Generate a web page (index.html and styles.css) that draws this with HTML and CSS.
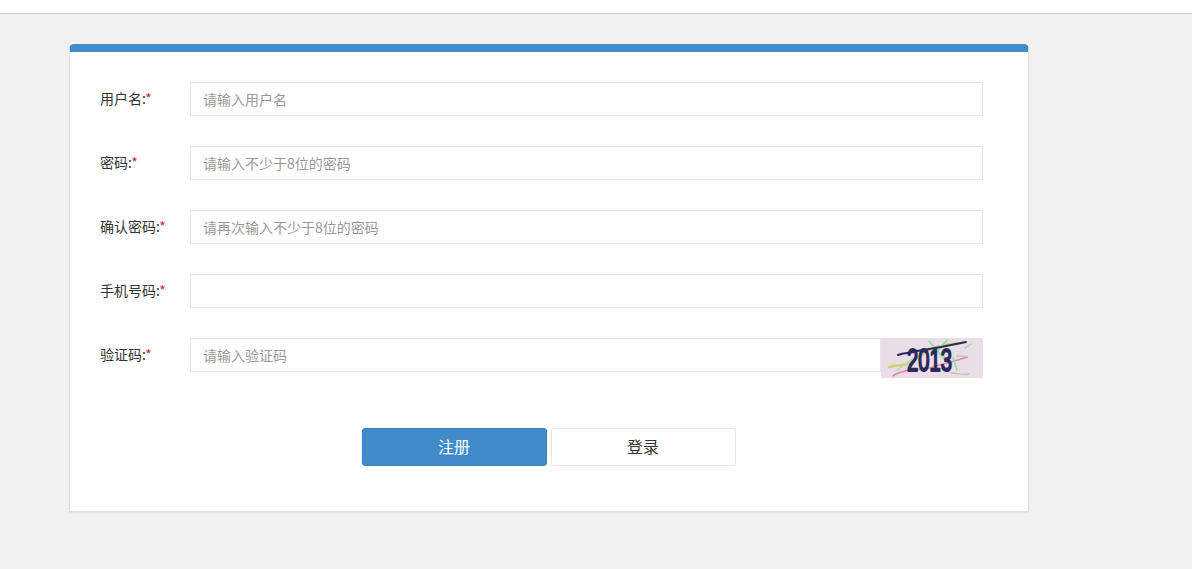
FILE: index.html
```html
<!DOCTYPE html>
<html lang="zh">
<head>
<meta charset="utf-8">
<title>注册</title>
<link rel="stylesheet" href="styles.css">
</head>
<body>
<header class="topbar"></header>
<main class="page">
  <form class="card">
    <div class="row">
      <label class="label">用户名:<span class="req">*</span></label>
      <input class="field" type="text" placeholder="请输入用户名">
    </div>
    <div class="row">
      <label class="label">密码:<span class="req">*</span></label>
      <input class="field" type="text" placeholder="请输入不少于8位的密码">
    </div>
    <div class="row">
      <label class="label">确认密码:<span class="req">*</span></label>
      <input class="field" type="text" placeholder="请再次输入不少于8位的密码">
    </div>
    <div class="row">
      <label class="label">手机号码:<span class="req">*</span></label>
      <input class="field" type="text">
    </div>
    <div class="row">
      <label class="label">验证码:<span class="req">*</span></label>
      <input class="field" type="text" placeholder="请输入验证码">
      <svg class="captcha" width="102" height="40" viewBox="0 0 102 40">
        <rect width="102" height="40" fill="#e9dde8"/>
        <g fill="none" stroke-linecap="round">
          <path d="M8 29C18 26 26 29 34 22S50 7 79 5" stroke="#d8cf6a" stroke-width="2.5"/>
          <path d="M12 38C22 30 40 33 52 29S72 24 86 19" stroke="#e58a9a" stroke-width="1.6"/>
          <path d="M16 32L30 22L44 14" stroke="#a8e0a8" stroke-width="1.4"/>
          <path d="M48 3L64 22M66 2L54 16M72 20L76 32" stroke="#86e29a" stroke-width="1.5"/>
          <path d="M70 35C76 35 80 37 88 36M76 18C82 17 84 20 86 18M84 10L90 6" stroke="#bcc9a8" stroke-width="1.3"/>
          <path d="M17 17C24 14 28 16 36 13L60 9L85 4" stroke="#2b2a5c" stroke-width="2"/>
        </g>
        <text class="captcha-text" x="26" y="33" textLength="45" lengthAdjust="spacingAndGlyphs">2013</text>
      </svg>
    </div>
    <div class="actions">
      <button class="btn primary" type="button">注册</button>
      <button class="btn" type="button">登录</button>
    </div>
  </form>
</main>
</body>
</html>
```
FILE: styles.css
```css
* { box-sizing: border-box; }
html, body { margin: 0; height: 100%; }
body {
  background: #f1f1f1;
  color: #333;
  font-family: "Noto Sans CJK SC", "Liberation Sans", sans-serif;
  font-size: 14px;
  overflow: hidden;
}
.topbar {
  height: 14px;
  background: #fff;
  border-bottom: 1px solid #ccc;
}
.page { padding: 30px 0 0 69px; }
.card {
  width: 960px;
  height: 468px;
  background: #fff;
  border: 1px solid #e0e0e0;
  border-top: 8px solid #428bca;
  border-radius: 5px 5px 0 0;
  padding: 30px 45px 0 30px;
  box-shadow: 0 1px 2px rgba(0,0,0,.06);
}
.row {
  display: flex;
  height: 34px;
  margin-bottom: 30px;
}
.label {
  width: 90px;
  flex: none;
  line-height: 32px;
  color: #333;
}
.req { color: #e0182d; }
.field {
  flex: 1;
  min-width: 0;
  height: 34px;
  padding: 0 12px;
  border: 1px solid #e5e5e5;
  font: inherit;
  color: #333;
  background: #fff;
  outline: none;
}
.field::placeholder { color: #999; opacity: 1; }
.captcha { flex: none; display: block; }
.captcha-text {
  font-family: "Liberation Sans", sans-serif;
  font-size: 32px;
  font-weight: 400;
  fill: #2b2a5c;
  stroke: #2b2a5c;
  stroke-width: 2px;
  stroke-linejoin: round;
}
.actions {
  display: flex;
  justify-content: center;
  gap: 4px;
  margin-top: 56px;
  padding-left: 14px;
}
.btn {
  width: 185px;
  height: 38px;
  border: 1px solid #e5e5e5;
  border-radius: 3px;
  background: #fff;
  color: #333;
  font: inherit;
  font-size: 16px;
  padding: 0 0 2px;
}
.btn.primary {
  background: #428bca;
  border-color: #3c80bb;
  color: #fff;
}
```
